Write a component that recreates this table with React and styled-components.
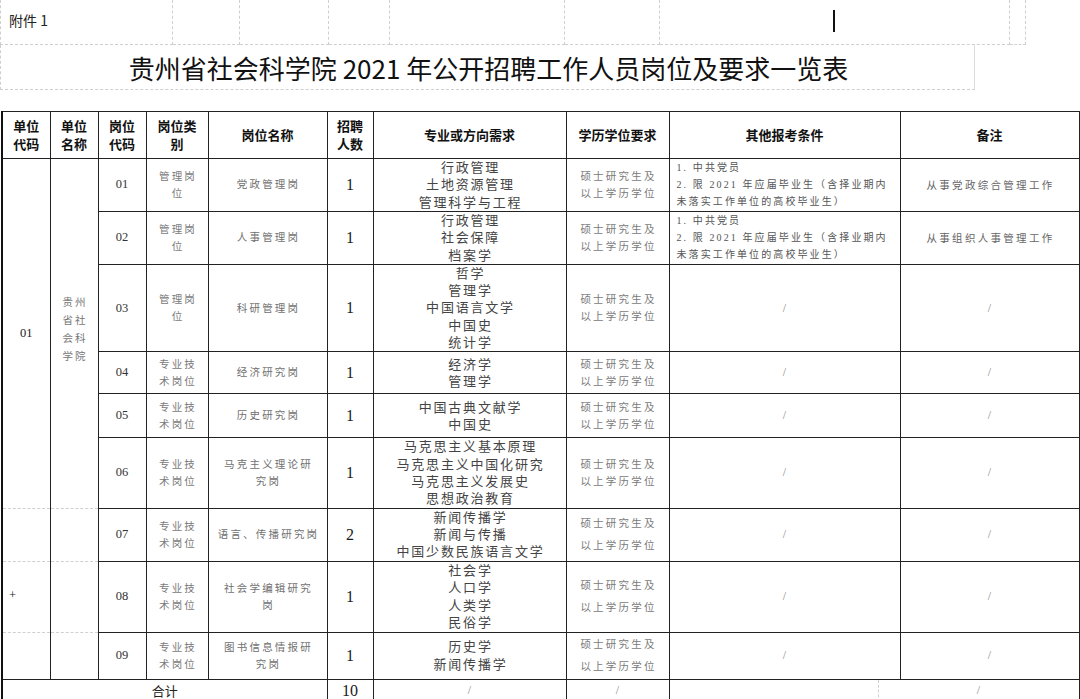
import styled, { createGlobalStyle } from "styled-components";

const GlobalStyle = createGlobalStyle`
  html, body {
    margin: 0;
    padding: 0;
    background: #fff;
  }
  body {
    font-family: "Noto Sans CJK SC", "Liberation Sans", sans-serif;
    color: #111;
  }
`

const EDU = ["硕士研究生及", "以上学历学位"]
const OTHER = ["1. 中共党员", "2. 限 2021 年应届毕业生（含择业期内", "未落实工作单位的高校毕业生）"]
const MGMT = ["管理岗", "位"]
const TECH = ["专业技", "术岗位"]

const rows = [
  { code: "01", type: MGMT, name: ["党政管理岗"], count: 1, major: ["行政管理", "土地资源管理", "管理科学与工程"], other: OTHER, remark: "从事党政综合管理工作", h: 51 },
  { code: "02", type: MGMT, name: ["人事管理岗"], count: 1, major: ["行政管理", "社会保障", "档案学"], other: OTHER, remark: "从事组织人事管理工作", h: 53 },
  { code: "03", type: MGMT, name: ["科研管理岗"], count: 1, major: ["哲学", "管理学", "中国语言文学", "中国史", "统计学"], h: 87 },
  { code: "04", type: TECH, name: ["经济研究岗"], count: 1, major: ["经济学", "管理学"], h: 42 },
  { code: "05", type: TECH, name: ["历史研究岗"], count: 1, major: ["中国古典文献学", "中国史"], h: 44 },
  { code: "06", type: TECH, name: ["马克主义理论研", "究岗"], count: 1, major: ["马克思主义基本原理", "马克思主义中国化研究", "马克思主义发展史", "思想政治教育"], h: 70 },
  { code: "07", type: TECH, name: ["语言、传播研究岗"], count: 2, major: ["新闻传播学", "新闻与传播", "中国少数民族语言文学"], h: 53, loose: true, unit: "" },
  { code: "08", type: TECH, name: ["社会学编辑研究", "岗"], count: 1, major: ["社会学", "人口学", "人类学", "民俗学"], h: 71, loose: true, unit: "+" },
  { code: "09", type: TECH, name: ["图书信息情报研", "究岗"], count: 1, major: ["历史学", "新闻传播学"], h: 47, loose: true, unit: "" },
]

const topCells = [173, 67, 89, 61, 175, 95, 350, 16]

function Lines({ items }) {
  return items.map((t, i) => (
    <span key={i}>
      {i > 0 && <br />}
      {t}
    </span>
  ))
}

function App() {
  return (
    <Page>
      <GlobalStyle />
      <TopRow>
        {topCells.map((w, i) => (
          <GridCell key={i} style={{ width: w }} $first={i === 0}>
            {i === 0 && <Attach>附件 1</Attach>}
            {i === 6 && <Caret />}
          </GridCell>
        ))}
      </TopRow>
      <TitleBox>贵州省社会科学院 2021 年公开招聘工作人员岗位及要求一览表</TitleBox>
      <Gap />
      <Sheet>
        <colgroup>
          {[48, 48, 48, 62, 119, 46, 193, 103, 231, 179].map((w, i) => (
            <col key={i} style={{ width: w }} />
          ))}
        </colgroup>
        <thead>
          <tr style={{ height: 47 }}>
            <Head><Lines items={["单位", "代码"]} /></Head>
            <Head><Lines items={["单位", "名称"]} /></Head>
            <Head><Lines items={["岗位", "代码"]} /></Head>
            <Head><Lines items={["岗位类", "别"]} /></Head>
            <Head>岗位名称</Head>
            <Head><Lines items={["招聘", "人数"]} /></Head>
            <Head>专业或方向需求</Head>
            <Head>学历学位要求</Head>
            <Head>其他报考条件</Head>
            <Head>备注</Head>
          </tr>
        </thead>
        <tbody>
          {rows.map((r, i) => (
            <tr key={r.code} style={{ height: r.h }}>
              {i === 0 && (
                <>
                  <UnitCell rowSpan={6} $merged>01</UnitCell>
                  <UnitName rowSpan={6} $merged>
                    <Lines items={["贵州", "省社", "会科", "学院"]} />
                  </UnitName>
                </>
              )}
              {i >= 6 && (
                <>
                  <UnitCell $left $last={i === rows.length - 1}>{r.unit}</UnitCell>
                  <UnitName $last={i === rows.length - 1} />
                </>
              )}
              <CodeCell>{r.code}</CodeCell>
              <GrayCell><Lines items={r.type} /></GrayCell>
              <GrayCell $tone="#707070"><Lines items={r.name} /></GrayCell>
              <CountCell>{r.count}</CountCell>
              <MajorCell><Lines items={r.major} /></MajorCell>
              <GrayCell $loose={r.loose}><Lines items={EDU} /></GrayCell>
              {r.other ? (
                <OtherCell><Lines items={r.other} /></OtherCell>
              ) : (
                <SlashCell>/</SlashCell>
              )}
              {r.remark ? <RemarkCell>{r.remark}</RemarkCell> : <SlashCell>/</SlashCell>}
            </tr>
          ))}
          <tr style={{ height: 22 }}>
            <TotalCell colSpan={5}>合计</TotalCell>
            <CountCell>10</CountCell>
            <SlashCell>/</SlashCell>
            <SlashCell>/</SlashCell>
            <SplitCell colSpan={2}>
              <Split>
                <SplitPart $w={208} $dashed />
                <SplitPart>/</SplitPart>
              </Split>
            </SplitCell>
          </tr>
        </tbody>
      </Sheet>
    </Page>
  )
}

const Page = styled.div`
  width: 1080px;
  height: 699px;
  overflow: hidden;
`

const TopRow = styled.div`
  display: flex;
  height: 45px;
`

const GridCell = styled.div`
  box-sizing: border-box;
  height: 45px;
  display: flex;
  align-items: center;
  justify-content: center;
  border-right: 1px dashed #cfcfcf;
  border-bottom: 1px dashed #cfcfcf;
  border-left: ${(p) => (p.$first ? "1px dashed #cfcfcf" : "none")};
`

const Attach = styled.span`
  flex: 1;
  padding-left: 8px;
  padding-bottom: 4px;
  font-size: 14px;
  color: #222;
`

const Caret = styled.span`
  width: 2px;
  height: 22px;
  margin-bottom: 2px;
  margin-right: 2px;
  background: #111;
`

const TitleBox = styled.div`
  box-sizing: border-box;
  width: 975px;
  height: 45px;
  display: flex;
  align-items: center;
  justify-content: center;
  border-left: 1px dashed #cfcfcf;
  border-right: 1px solid #dcdcdc;
  border-bottom: 1px dashed #cfcfcf;
  font-size: 26px;
  color: #111;
  padding-left: 2px;
`

const Gap = styled.div`
  height: 21px;
`

const Sheet = styled.table`
  margin-left: 1px;
  border-collapse: collapse;
  table-layout: fixed;
  width: 1077px;
  border-left: 2px solid #111;
  font-family: "Liberation Serif", "Noto Sans CJK SC", serif;
  td, th {
    border: 1px solid #222;
    padding: 0;
    text-align: center;
    vertical-align: middle;
    overflow: hidden;
  }
`

const Head = styled.th`
  font-family: "Noto Sans CJK SC", sans-serif;
  font-size: 13px;
  font-weight: 700;
  line-height: 18px;
  color: #111;
`

const UnitCell = styled.td`
  font-size: 12.5px;
  color: #222;
  text-align: ${(p) => (p.$left ? "left" : "center")} !important;
  padding-left: ${(p) => (p.$left ? "6px" : "0")} !important;
  padding-bottom: ${(p) => (p.$left ? "2px" : "0")} !important;
  border-bottom: ${(p) => (p.$last ? "1px solid #222" : "1px dashed #cfcfcf")} !important;
  border-top: ${(p) => (p.$merged ? "1px solid #222" : "1px dashed #cfcfcf")} !important;
`

const UnitName = styled(UnitCell)`
  font-family: "Noto Sans CJK SC", sans-serif;
  font-size: 10.5px;
  letter-spacing: 2px;
  line-height: 18px;
  color: #777;
  padding-left: 2px !important;
  padding-bottom: 8px !important;
`

const CodeCell = styled.td`
  font-size: 12.5px;
  color: #333;
`

const GrayCell = styled.td`
  font-size: 10.5px;
  letter-spacing: 2.2px;
  line-height: ${(p) => (p.$loose ? "22px" : "17px")};
  color: ${(p) => p.$tone || "#7a7a7a"};
  padding-left: 2px !important;
`

const CountCell = styled.td`
  font-size: 16px;
  color: #1a1a1a;
`

const MajorCell = styled.td`
  font-size: 13px;
  letter-spacing: 1.8px;
  line-height: 17.3px;
  color: #444;
  padding-left: 2px !important;
`

const OtherCell = styled.td`
  text-align: left !important;
  padding-left: 7px !important;
  font-size: 10px;
  letter-spacing: 2.1px;
  line-height: 17px;
  color: #555;
  white-space: nowrap;
`

const RemarkCell = styled.td`
  font-size: 10.5px;
  letter-spacing: 2.3px;
  color: #666;
  padding-left: 2px !important;
`

const SlashCell = styled.td`
  font-size: 12px;
  color: #8a8a8a;
`

const TotalCell = styled.td`
  font-family: "Noto Sans CJK SC", sans-serif;
  font-size: 13px;
  color: #222;
`

const SplitCell = styled.td`
  height: 22px;
`

const Split = styled.div`
  display: flex;
  height: 22px;
`

const SplitPart = styled.div`
  flex: ${(p) => (p.$w ? `0 0 ${p.$w}px` : "1")};
  border-right: ${(p) => (p.$dashed ? "1px dashed #cfcfcf" : "none")};
  display: flex;
  align-items: center;
  justify-content: center;
  font-size: 12px;
  color: #8a8a8a;
`

export default App
